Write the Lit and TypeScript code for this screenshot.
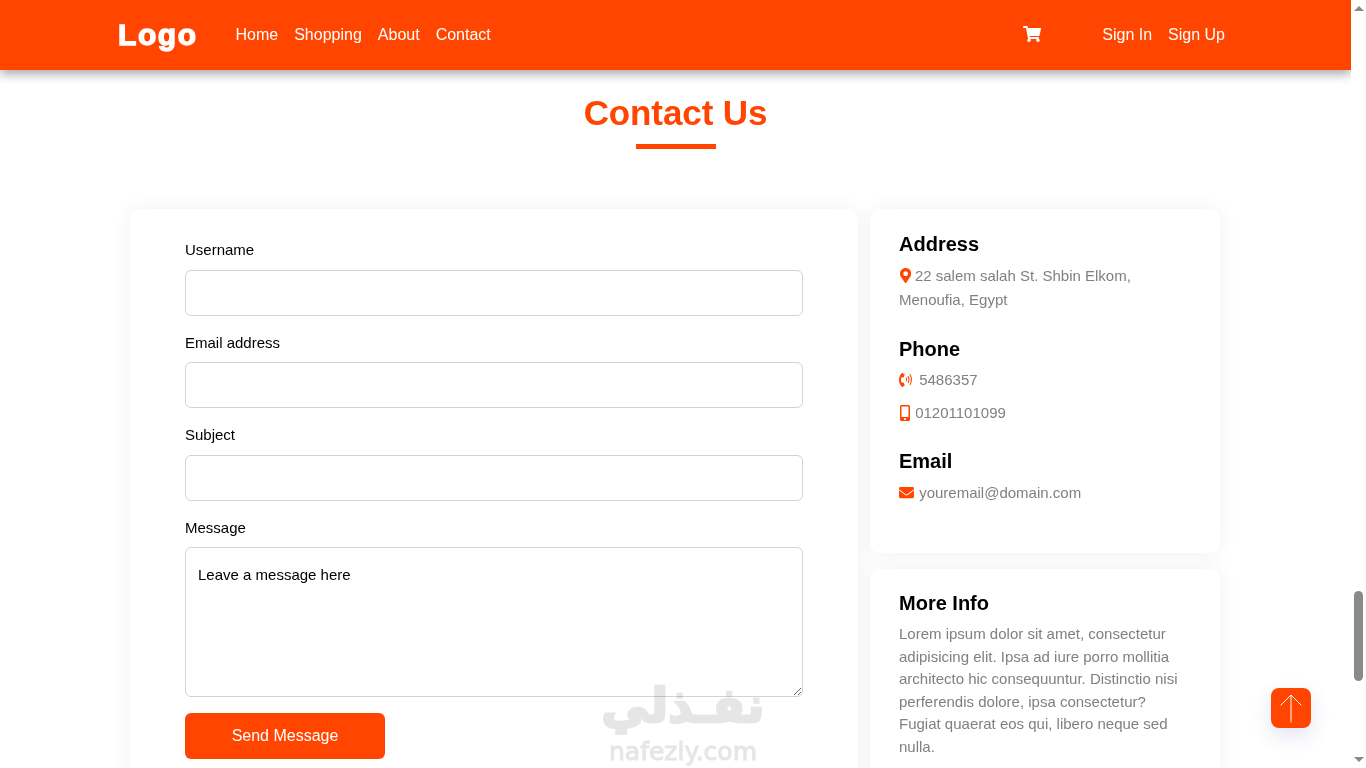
import { LitElement, html, css, svg } from "lit";
import { customElement } from "lit/decorators.js";

const ic = {
  marker: svg`<path d="M172.268 501.67C26.97 291.031 0 262.633 0 192 0 85.961 85.961 0 192 0s192 85.961 192 192c0 70.633-26.97 99.031-172.268 309.67-9.535 13.774-29.93 13.773-39.464 0zM192 272c44.183 0 80-35.817 80-80s-35.817-80-80-80-80 35.817-80 80 35.817 80 80 80z"/>`,
  cart: svg`<path d="M528.12 301.319l47.273-208C578.806 78.301 567.391 64 551.99 64H159.208l-9.166-44.81C147.758 8.021 137.93 0 126.529 0H24C10.745 0 0 10.745 0 24v16c0 13.255 10.745 24 24 24h69.883l70.248 343.435C147.325 417.1 136 435.222 136 456c0 30.928 25.072 56 56 56s56-25.072 56-56c0-15.674-6.447-29.835-16.824-40h209.647C430.447 426.165 424 440.326 424 456c0 30.928 25.072 56 56 56s56-25.072 56-56c0-22.172-12.888-41.332-31.579-50.405l5.517-24.276c3.413-15.018-8.002-29.319-23.403-29.319H218.117l-6.545-32h293.145c11.206 0 20.92-7.754 23.403-18.681z"/>`,
  mobile: svg`<path d="M272 0H48C21.5 0 0 21.5 0 48v416c0 26.5 21.5 48 48 48h224c26.5 0 48-21.5 48-48V48c0-26.5-21.5-48-48-48zM160 480c-17.7 0-32-14.3-32-32s14.3-32 32-32 32 14.3 32 32-14.3 32-32 32zm112-108c0 6.6-5.4 12-12 12H60c-6.6 0-12-5.4-12-12V60c0-6.6 5.4-12 12-12h200c6.6 0 12 5.4 12 12v312z"/>`,
  mail: svg`<path d="M502.3 190.8c3.9-3.1 9.7-.2 9.7 4.7V400c0 26.5-21.5 48-48 48H48c-26.5 0-48-21.5-48-48V195.6c0-5 5.7-7.8 9.7-4.7 22.4 17.4 52.1 39.5 154.1 113.6 21.1 15.4 56.7 47.8 92.2 47.6 35.7.3 72-32.8 92.3-47.6 102-74.1 131.6-96.3 154-113.7zM256 320c23.2.4 56.6-29.2 73.4-41.4 132.7-96.3 142.8-104.7 173.4-128.7 5.8-4.5 9.2-11.5 9.2-18.9v-19c0-26.5-21.5-48-48-48H48C21.5 64 0 85.5 0 112v19c0 7.4 3.4 14.3 9.2 18.9 30.6 23.9 40.7 32.4 173.4 128.7 16.8 12.2 50.2 41.8 73.4 41.4z"/>`,
  phone: svg`<path d="M97.333 506.966c-129.874-129.874-129.681-340.252 0-469.933 5.698-5.698 14.527-6.632 21.263-2.422l64.817 40.513a17.187 17.187 0 0 1 6.849 20.958l-32.408 81.021a17.188 17.188 0 0 1-17.669 10.719l-55.81-5.58c-21.051 58.261-20.612 122.471 0 179.515l55.811-5.581a17.188 17.188 0 0 1 17.669 10.719l32.408 81.022a17.188 17.188 0 0 1-6.849 20.958l-64.817 40.513a17.19 17.19 0 0 1-21.264-2.422z"/><path fill="none" stroke="#ff4500" stroke-width="36" stroke-linecap="round" d="M245 205q26 51 0 102M310 145q60 111 0 222M378 85q92 171 0 342"/>`,
};

@customElement("app-root")
export class AppRoot extends LitElement {
  static styles = css`
    :host { display: flex; width: 1366px; height: 768px; overflow: hidden; background: #fff;
      font-family: "Liberation Sans", Arial, sans-serif; color: #000; }
    * { box-sizing: border-box; }
    .page { position: relative; width: 1351px; height: 768px; overflow: hidden; flex: none; }

    header { position: relative; z-index: 2; height: 70px; background: #ff4500; color: #fff;
      display: flex; align-items: center; padding: 0 126px 0 118px;
      box-shadow: 0 4px 10px rgba(0,0,0,.35); font-size: 16px; }
    .logo { font-size: 30px; font-weight: 700; letter-spacing: 1.6px; -webkit-text-stroke: 1.4px #fff; width: 117.5px; flex: none; }
    nav { display: flex; gap: 16px; }
    .right { margin-left: auto; display: flex; align-items: center; }
    .cart { width: 18px; height: 16px; fill: #fff; display: block; margin-right: 61.5px; position: relative; top: -1px; }
    .signs { display: flex; gap: 16px; }

    .title { text-align: center; padding-top: 22px; }
    h2 { margin: 0; color: #ff4500; font-size: 35px; line-height: 42px; font-weight: 700; letter-spacing: -.1px; }
    .bar { width: 80px; height: 5px; background: #ff4500; margin: 10px auto 0; }

    .grid { display: grid; grid-template-columns: 728px 350px; column-gap: 12px; padding: 60px 0 0 130px; }
    .card { background: #fff; border-radius: 10px; box-shadow: 0 0 20px rgba(0,0,0,.06); }
    form { padding: 30px 55px 40px; }
    .field { margin-bottom: 16px; }
    label { display: block; font-size: 15px; line-height: 22.5px; margin-bottom: 8px; }
    input, textarea { display: block; width: 618px; height: 46px; border: 1px solid #ced4da; border-radius: 6px;
      background: #fff; padding: 6px 12px; font: 15px/22.5px "Liberation Sans", Arial, sans-serif; color: #000; outline: none; margin: 0; }
    textarea { height: 150px; padding-top: 16px; }
    .send { display: block; width: 200px; height: 46px; border: 0; border-radius: 6px; background: #ff4500; color: #fff;
      font: 16px "Liberation Sans", Arial, sans-serif; }

    .side { display: flex; flex-direction: column; gap: 16px; }
    .info { padding: 23px 29px 48px; height: 344px; }
    .more { padding: 22px 29px 30px; }
    h4 { margin: 0 0 8px; font-size: 20px; line-height: 24px; font-weight: 700; }
    .sec { margin-bottom: 25px; }
    .sec.b { margin-bottom: 24px; }
    .sec.b h4 { margin-bottom: 7px; }
    p { margin: 0; color: #808080; font-size: 15px; line-height: 24px; }
    p + p { margin-top: 9px; }
    .more p { line-height: 22.5px; }
    .i { fill: #ff4500; height: 15px; vertical-align: -2px; }
    .i.w15 { width: 15px; margin-right: 1px; }
    .i.pin { margin-left: .5px; width: 11.25px; }
    .i.mob { margin-left: 1px; width: 10px; height: 16px; margin-right: 1px; vertical-align: -3px; }

    .wm { position: absolute; z-index: 1; left: 598px; top: 674px; width: 170px; text-align: center; pointer-events: none; color: #e6e6e6; mix-blend-mode: multiply; }
    .wm .ar { font: 700 48px/62px "DejaVu Sans", sans-serif; white-space: nowrap; -webkit-text-stroke: 2.5px #e6e6e6; }
    .wm .en { font: 400 25px/26px "DejaVu Sans", sans-serif; white-space: nowrap; margin-top: 3px; -webkit-text-stroke: 1px #e6e6e6; }

    .top { position: absolute; z-index: 3; left: 1271px; top: 688px; width: 40px; height: 40px; border-radius: 8px;
      background: #ff4500; box-shadow: 0 8px 20px rgba(70,80,160,.15); display: flex; align-items: center; justify-content: center; }
    .top svg { width: 40px; height: 40px; fill: none; stroke: #fff; stroke-width: 1; display: block; }

    .scroll { width: 15px; height: 768px; flex: none; background: #fff; display: flex; flex-direction: column; align-items: center; padding: 6px 0; }
    .tri-up { width: 0; height: 0; border: 5px solid transparent; border-top: 0; border-bottom: 5px solid #8a8a8a; flex: none; }
    .thumb { width: 9px; height: 90px; margin-top: 580px; background: #8a8a8a; border-radius: 5px; flex: none; }
    .tri-down { width: 0; height: 0; border: 5px solid transparent; border-bottom: 0; border-top: 5px solid #8a8a8a; margin-top: auto; flex: none; }
  `;

  render() {
    return html`
      <div class="page">
        <header>
          <div class="logo">Logo</div>
          <nav><span>Home</span><span>Shopping</span><span>About</span><span>Contact</span></nav>
          <div class="right">
            <svg class="cart" viewBox="0 0 576 512">${ic.cart}</svg>
            <div class="signs"><span>Sign In</span><span>Sign Up</span></div>
          </div>
        </header>
        <div class="title"><h2>Contact Us</h2><div class="bar"></div></div>
        <div class="grid">
          <form class="card">
            <div class="field"><label>Username</label><input type="text" /></div>
            <div class="field"><label>Email address</label><input type="email" /></div>
            <div class="field"><label>Subject</label><input type="text" /></div>
            <div class="field"><label>Message</label><textarea>Leave a message here</textarea></div>
            <button type="button" class="send">Send Message</button>
          </form>
          <div class="side">
            <div class="card info">
              <div class="sec">
                <h4>Address</h4>
                <p><svg class="i pin" viewBox="0 0 384 512">${ic.marker}</svg> 22 salem salah St. Shbin Elkom, Menoufia, Egypt</p>
              </div>
              <div class="sec b">
                <h4>Phone</h4>
                <p><svg class="i w15" viewBox="0 0 512 512">${ic.phone}</svg> 5486357</p>
                <p><svg class="i mob" viewBox="0 0 320 512">${ic.mobile}</svg> 01201101099</p>
              </div>
              <div>
                <h4>Email</h4>
                <p><svg class="i w15" viewBox="0 0 512 512">${ic.mail}</svg> youremail@domain.com</p>
              </div>
            </div>
            <div class="card more">
              <h4>More Info</h4>
              <p>Lorem ipsum dolor sit amet, consectetur adipisicing elit. Ipsa ad iure porro mollitia architecto hic consequuntur. Distinctio nisi perferendis dolore, ipsa consectetur? Fugiat quaerat eos qui, libero neque sed nulla.</p>
            </div>
          </div>
        </div>
        <div class="wm"><div class="ar" lang="ar" dir="rtl">نفـذلي</div><div class="en">nafezly.com</div></div>
        <div class="top">
          <svg viewBox="0 0 40 40"><path d="M20 34.5V7M9.5 17.5 20 7l10.5 10.5"/></svg>
        </div>
      </div>
      <div class="scroll">
        <div class="tri-up"></div>
        <div class="thumb"></div>
        <div class="tri-down"></div>
      </div>
    `;
  }
}
